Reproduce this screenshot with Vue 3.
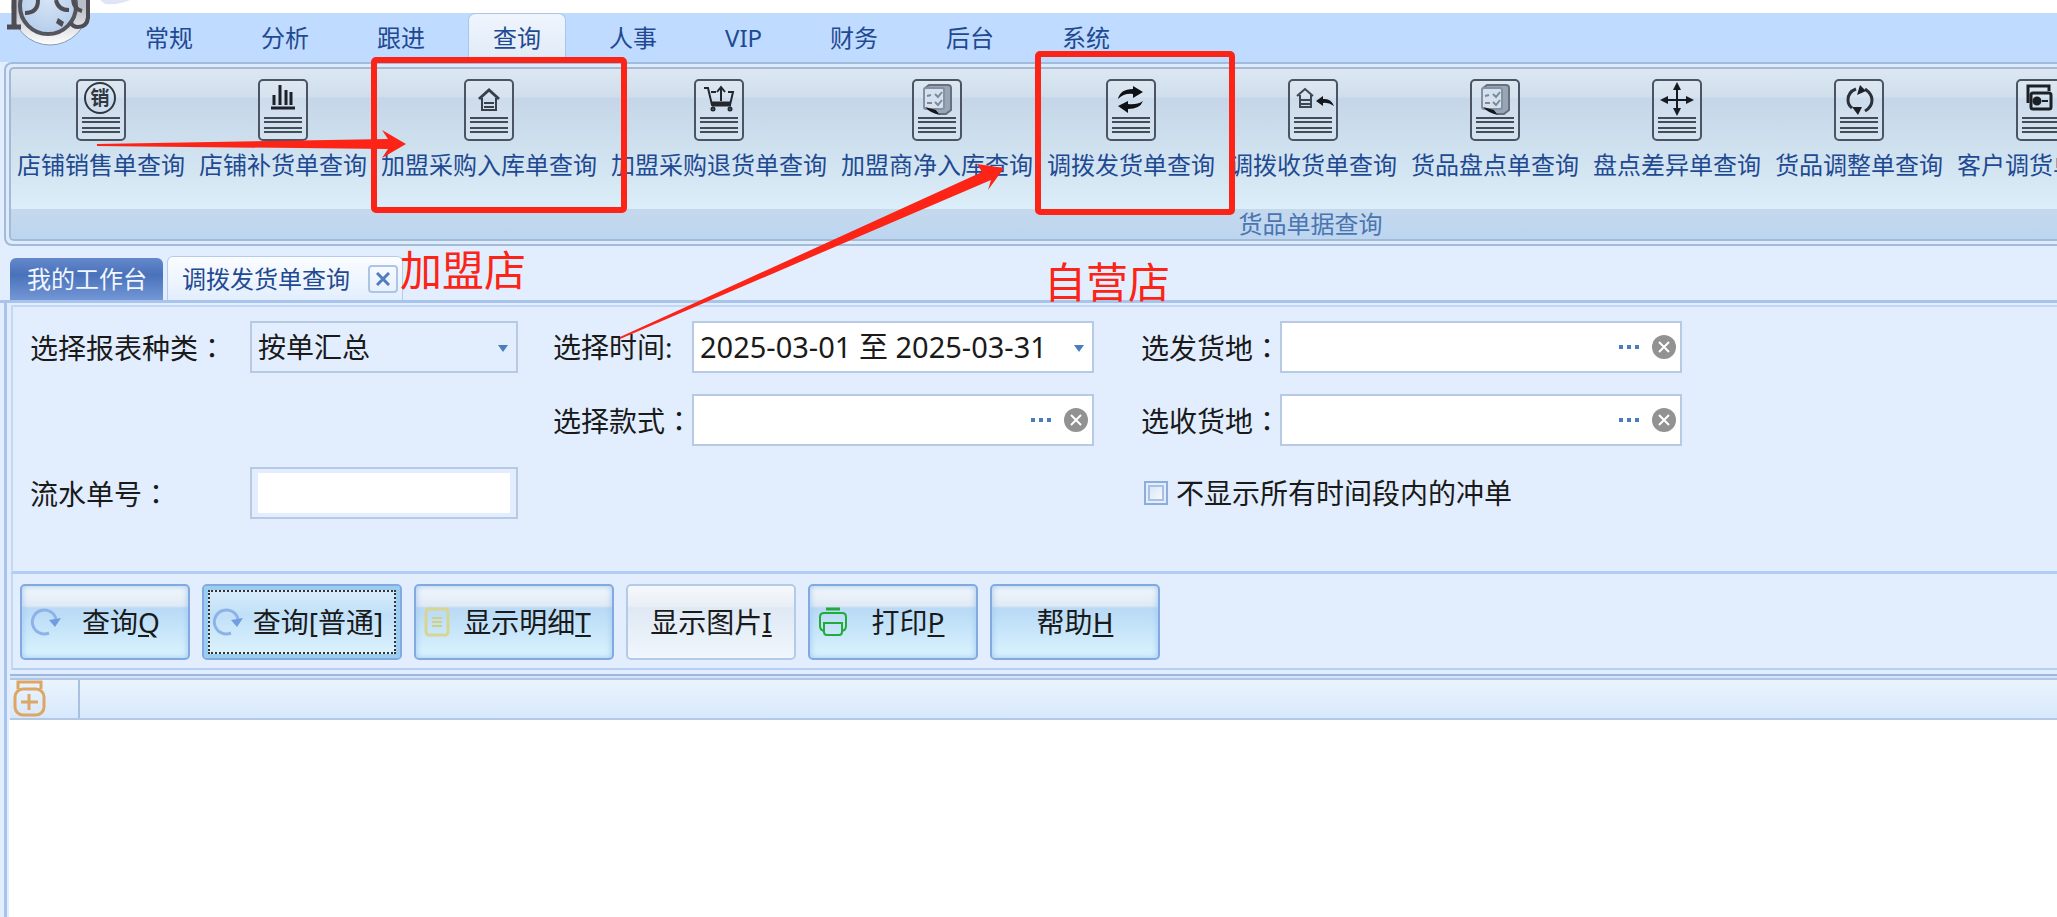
<script setup>
  import {ref} from "vue";

  const menus = ["常规", "分析", "跟进", "查询", "人事", "VIP", "财务", "后台", "系统"];
  const activeMenu = ref("查询");

  const reports = [
    {text: "店铺销售单查询", icon: "sale"},
    {text: "店铺补货单查询", icon: "chart"},
    {text: "加盟采购入库单查询", icon: "house"},
    {text: "加盟采购退货单查询", icon: "cart"},
    {text: "加盟商净入库查询", icon: "book"},
    {text: "调拨发货单查询", icon: "swap"},
    {text: "调拨收货单查询", icon: "receive"},
    {text: "货品盘点单查询", icon: "book"},
    {text: "盘点差异单查询", icon: "move"},
    {text: "货品调整单查询", icon: "cycle"},
    {text: "客户调货单查询", icon: "cards"}
  ];

  const reportType = ref("按单汇总");
  const period = ref("2025-03-01 至 2025-03-31");
  const serialNo = ref("");
  const hideReversed = ref(false);

  const lookups = ref([
    {id: "from", label: "选发货地", value: ""},
    {id: "style", label: "选择款式", value: ""},
    {id: "to", label: "选收货地", value: ""}
  ]);

  const actions = [
    {text: "查询", key: "Q", icon: "refresh"},
    {text: "查询[普通]", key: "", icon: "refresh", wide: true, focused: true},
    {text: "显示明细", key: "T", icon: "list", wide: true},
    {text: "显示图片", key: "I", plain: true},
    {text: "打印", key: "P", icon: "print"},
    {text: "帮助", key: "H"}
  ];
</script>

<template>
  <main>
    <div class="title-bar"></div>
    <nav class="menu">
      <button
        v-for="menu in menus"
        :key="menu"
        :class="{active: menu === activeMenu}"
        @click="activeMenu = menu">{{ menu }}</button>
    </nav>

    <svg class="logo" width="140" height="50" viewBox="0 0 140 50">
      <defs>
        <radialGradient id="logoFill" cx="50%" cy="40%" r="60%">
          <stop offset="0" stop-color="#d5e4f5" />
          <stop offset="1" stop-color="#b5cdec" />
        </radialGradient>
        <linearGradient id="logoRing" x1="0" y1="0" x2="0" y2="1">
          <stop offset="0.5" stop-color="#b9bec8" />
          <stop offset="1" stop-color="#ffffff" />
        </linearGradient>
      </defs>
      <circle cx="50" cy="7" r="38" fill="url(#logoRing)" stroke="#8c9bb5" />
      <circle cx="48" cy="6" r="28" fill="url(#logoFill)" stroke="#55555d" stroke-width="4" />
      <g fill="none" stroke="#4f4d54" stroke-width="5">
        <path d="M14 0V27M7 27H21" />
        <path d="M25 13Q38 13 38 0" stroke-width="4" />
        <path d="M56 0Q58 10 69 10" stroke-width="4" />
        <path d="M73 0Q74 9 82 11M88 0V18Q87 27 78 27Q73 27 71 23" stroke-width="4" />
      </g>
      <path d="M58 18L64 22L62 27L56 23z" fill="#4f4d54" />
      <path d="M100 0H130Q120 5 105 4z" fill="#dfe5f4" />
    </svg>

    <section class="ribbon">
      <div class="ribbon-group">
        <div class="reports">
          <button v-for="report in reports" :key="report.text">
            <svg width="50" height="62" viewBox="0 0 50 62">
              <rect x="1" y="1" width="48" height="60" rx="4" fill="#ffffff" fill-opacity="0.15" stroke="#4a5463" stroke-width="2" />
              <path d="M6 39H44M6 43H44M6 49H44M6 53H44" stroke="#434c59" stroke-width="2" />
              <g v-if="report.icon === 'sale'">
                <circle cx="24" cy="19" r="15" fill="none" stroke="#2f3742" stroke-width="2" />
                <text x="24" y="26" text-anchor="middle" font-size="19" font-weight="bold" fill="#2f3742">销</text>
              </g>
              <path v-else-if="report.icon === 'chart'" d="M13 29H37M16 26V16M22 26V6M28 26V11M33 26V13" fill="none" stroke="#1c2128" stroke-width="3" />
              <g v-else-if="report.icon === 'house'" fill="none" stroke="#39404b" stroke-width="2">
                <path d="M15 20L25 11L35 20" stroke-width="3" />
                <path d="M18 19V31H32V19M20 24H30M20 28H30" />
              </g>
              <g v-else-if="report.icon === 'cart'" fill="none" stroke="#22272e" stroke-width="3">
                <path d="M10 9H14L18 26H36L39 13H34M17 13H22" stroke-width="2" />
                <path d="M18 25H37" stroke-width="5" />
                <path d="M27 22V9M23 13L27 8L31 13" stroke-width="2" />
                <circle cx="19" cy="30" r="1" />
                <circle cx="36" cy="30" r="1" />
              </g>
              <g v-else-if="report.icon === 'book'">
                <path d="M12 10L17 6H36Q39 6 39 9V31L34 35H27" fill="#97a5b5" stroke="#66717f" stroke-width="2" />
                <rect x="12" y="9" width="20" height="21" rx="2" fill="#d5e1ee" stroke="#8492a4" stroke-width="2" />
                <path d="M15 17L19 16M15 24H20M23 15L26 18L30 13M23 23L26 26L30 21" fill="none" stroke="#7b8998" stroke-width="2" />
                <path d="M13 28L24 31L28 36Q18 34 13 28z" fill="#14181d" />
              </g>
              <g v-else-if="report.icon === 'swap'" fill="#0d1014">
                <path d="M12 20Q14 10 27 10V7L37 13L27 19V15Q18 14 12 20z" />
                <path d="M37 22Q34 30 22 30V34L12 27L22 22V25Q31 26 37 22z" />
              </g>
              <g v-else-if="report.icon === 'receive'">
                <path d="M9 17L17 10L25 17M12 16V28H23V16M12 21H23M12 25H23" fill="none" stroke="#3e4754" stroke-width="2" />
                <path d="M28 22L35 17V20Q43 19 46 27Q40 23 35 24V27z" fill="#14181d" />
              </g>
              <g v-else-if="report.icon === 'move'" fill="#171b21">
                <path d="M25 8V33M12 21H38" stroke="#171b21" stroke-width="2" />
                <path d="M25 3L29 11H21zM25 37L29 29H21zM8 21L16 17V25zM42 21L34 17V25z" />
              </g>
              <g v-else-if="report.icon === 'cycle'">
                <path d="M22 10Q14 13 14 21Q14 26 18 29M31 10Q38 15 38 21Q38 28 31 32" fill="none" stroke="#2a313a" stroke-width="3" />
                <path d="M26 6L32 12L23 16zM18 28H28L24 36z" fill="#1b2027" />
              </g>
              <g v-else fill="none" stroke="#1b2027" stroke-width="3">
                <path d="M12 24V7H33V12" />
                <rect x="15" y="14" width="20" height="16" rx="2" />
                <circle cx="21" cy="22" r="3" fill="#1b2027" />
                <path d="M26 22H32" stroke-width="2" />
              </g>
            </svg>
            <span>{{ report.text }}</span>
          </button>
        </div>
        <div class="group-title">货品单据查询</div>
      </div>
    </section>

    <div class="doc-tabs">
      <button class="doc-tab">我的工作台</button>
      <div class="doc-tab current">
        <span>调拨发货单查询</span>
        <button class="close" aria-label="关闭">
          <svg width="14" height="14" viewBox="0 0 14 14">
            <path d="M1 1L13 13M13 1L1 13" stroke="#4f7dbf" stroke-width="3" />
          </svg>
        </button>
      </div>
    </div>

    <div class="workspace">
      <form class="filters" @submit.prevent>
        <div class="field first">
          <label for="reportType">选择报表种类<span class="colon">：</span></label>
          <div class="box tinted">
            <select id="reportType" v-model="reportType">
              <option>按单汇总</option>
            </select>
            <svg class="caret" width="10" height="7" viewBox="0 0 10 7"><path d="M0 0H10L5 7z" fill="#4a7dbd" /></svg>
          </div>
        </div>
        <div class="field">
          <label for="period">选择时间:</label>
          <div class="box">
            <select id="period" class="period" v-model="period">
              <option>2025-03-01 至 2025-03-31</option>
            </select>
            <svg class="caret" width="10" height="7" viewBox="0 0 10 7"><path d="M0 0H10L5 7z" fill="#4a7dbd" /></svg>
          </div>
        </div>
        <div v-for="item in lookups" :key="item.id" class="field" :class="item.id">
          <label :for="item.id">{{ item.label }}<span class="colon">：</span></label>
          <div class="box">
            <input :id="item.id" type="text" v-model="item.value">
            <button type="button" class="more" aria-label="选择">
              <svg width="22" height="6" viewBox="0 0 22 6"><path d="M1 1h4v4h-4zM9 1h4v4h-4zM17 1h4v4h-4z" fill="#4a7dbd" /></svg>
            </button>
            <button type="button" class="clear" aria-label="清除" @click="item.value = ''">
              <svg width="24" height="24" viewBox="0 0 24 24">
                <circle cx="12" cy="12" r="12" fill="#929292" />
                <path d="M7 7L17 17M17 7L7 17" stroke="#fff" stroke-width="2" />
              </svg>
            </button>
          </div>
        </div>
        <div class="field first serial">
          <label for="serialNo">流水单号<span class="colon">：</span></label>
          <div class="box inset">
            <input id="serialNo" type="text" v-model="serialNo">
          </div>
        </div>
        <label class="check">
          <input type="checkbox" v-model="hideReversed">
          <span>不显示所有时间段内的冲单</span>
        </label>
      </form>

      <div class="actions">
        <button
          v-for="action in actions"
          :key="action.text"
          :class="{wide: action.wide, focused: action.focused, plain: action.plain}">
          <svg v-if="action.icon === 'refresh'" width="32" height="32" viewBox="0 0 32 32">
            <path d="M19 27A12 12 0 1 1 26 13" fill="none" stroke="#8eb2e8" stroke-width="3" />
            <path d="M19 14L31 12L25 21z" fill="#709ce0" />
          </svg>
          <svg v-else-if="action.icon === 'list'" width="26" height="32" viewBox="0 0 26 32">
            <rect x="2" y="3" width="22" height="26" rx="3" fill="none" stroke="#d8d590" stroke-width="3" />
            <path d="M8 12H18M8 16H18M8 20H18" stroke="#d3cf80" stroke-width="2" />
          </svg>
          <svg v-else-if="action.icon === 'print'" width="30" height="32" viewBox="0 0 30 32">
            <g fill="none" stroke="#22aa3a" stroke-width="2">
              <path d="M8 3H22" stroke-width="3" />
              <path d="M6 25Q2 24 2 20V11Q2 7 6 7H24Q28 7 28 11V20Q28 24 24 25" />
              <path d="M6 17H24V26Q24 29 21 29H9Q6 29 6 26z" />
            </g>
          </svg>
          <span>{{ action.text }}<u>{{ action.key }}</u></span>
        </button>
      </div>

      <div class="grid-head">
        <button class="expand" aria-label="展开">
          <svg width="34" height="38" viewBox="0 0 34 38" fill="none" stroke="#dda664" stroke-width="3">
            <path d="M5 9V2H28V9" />
            <rect x="2" y="9" width="29" height="26" rx="8" />
            <path d="M16 14V30M8 22H25" />
          </svg>
        </button>
      </div>
      <div class="grid-body"></div>
    </div>

    <div class="notes">
      <svg width="1240" height="345" viewBox="0 0 1240 345">
        <g fill="none" stroke="#fb2416" stroke-width="6">
          <rect x="374" y="60" width="250" height="150" rx="2" />
          <rect x="1038" y="54" width="194" height="158" rx="2" />
        </g>
        <path d="M97 144L388 139L382 130L406 144L382 158L388 149L97 146z" fill="#fb2416" />
        <path d="M620 337L982 172L977 164L1004 168L988 190L991 180L620 339z" fill="#fb2416" />
      </svg>
      <span class="note franchise">加盟店</span>
      <span class="note direct">自营店</span>
    </div>
  </main>
</template>

<style>
  body {
    margin: 0;
  }
</style>

<style scoped>
  main {
    position: relative;
    min-height: 100vh;
    overflow: hidden;
    display: flex;
    flex-direction: column;
    background-color: #e2eefe;
    font-family: "Noto Sans", "Noto Sans CJK SC", sans-serif;
    font-size: 24px;
    line-height: 32px;
    color: #1f4a91;
  }

  button, input, select {
    font: inherit;
    color: inherit;
    margin: 0;
    padding: 0;
    border: none;
    background: none;
    box-sizing: border-box;
  }

  svg {
    display: block;
    flex: none;
  }

  .title-bar {
    height: 13px;
    background-color: #fff;
  }

  .menu {
    display: flex;
    gap: 18px;
    height: 49px;
    padding-left: 120px;
    background-color: #bfdbff;
  }

  .menu button {
    padding: 0 24px;
    border: 1px solid transparent;
    border-radius: 7px 7px 0 0;
  }

  .menu .active {
    border-color: #a9c5e8;
    border-bottom-color: transparent;
    background: linear-gradient(#eff5fd, #e0ebf7);
  }

  .logo {
    position: absolute;
    left: 0;
    top: 0;
  }

  .ribbon {
    margin-left: 4px;
    padding: 3px 0 3px 3px;
    border: 2px solid #a3bbdb;
    border-right: none;
    border-radius: 8px 0 0 8px;
    background-color: #dcecfb;
  }

  .ribbon-group {
    border: 2px solid #a3b9d5;
    border-right: none;
    border-radius: 5px 0 0 5px;
    overflow: hidden;
    background: linear-gradient(#dce7f2, #d0deec 28px, #c5d6e9 29px, #cfe0ee 80px, #dceef9 140px);
  }

  .reports {
    display: flex;
    gap: 14px;
    height: 140px;
    padding-left: 6px;
  }

  .reports button {
    flex: none;
    display: flex;
    flex-direction: column;
    align-items: center;
    gap: 8px;
    padding-top: 10px;
    white-space: nowrap;
  }

  .group-title {
    height: 30px;
    padding-left: 60%;
    line-height: 30px;
    color: #4a75b1;
    background: linear-gradient(#c5d9ed, #bcd5f0);
  }

  .doc-tabs {
    display: flex;
    align-items: flex-end;
    gap: 4px;
    height: 54px;
    padding-left: 10px;
    border-bottom: 3px solid #a9c4ec;
  }

  .doc-tab {
    height: 42px;
    padding: 0 16px 0 17px;
    border-radius: 6px 6px 0 0;
    color: #f1f6ff;
    background: linear-gradient(#6488cb, #4a72ba 40%, #7397d6);
  }

  .current {
    display: flex;
    align-items: center;
    gap: 18px;
    height: 44px;
    padding: 0 4px 0 14px;
    border: 1px solid #b3cbee;
    border-bottom: none;
    color: #1f4a91;
    background: linear-gradient(#fbfdff, #e2eefe);
    box-sizing: border-box;
  }

  .close {
    display: flex;
    align-items: center;
    justify-content: center;
    width: 30px;
    height: 28px;
    border: 2px solid #adc4e4;
    border-radius: 4px;
  }

  .workspace {
    flex: 1;
    display: flex;
    flex-direction: column;
    margin-left: 4px;
    border-left: 3px solid #a9c4ec;
    font-size: 28px;
    line-height: 36px;
    color: #1a1a1a;
  }

  .filters {
    display: grid;
    grid-template-columns: 523px 588px 1fr;
    grid-template-rows: repeat(3, 52px);
    row-gap: 21px;
    margin-left: 4px;
    margin-top: 2px;
    padding: 14px 0 52px 17px;
    border-top: 2px solid #c2d8f6;
    border-left: 2px solid #c2d8f6;
    border-bottom: 3px solid #b0cdf3;
  }

  .field {
    display: flex;
    align-items: center;
    white-space: nowrap;
  }

  .field label {
    width: 139px;
    flex: none;
  }

  .first label {
    width: 220px;
  }

  /* full-width colon centred in its cell */
  .colon {
    font-family: "Noto Sans CJK TC", sans-serif;
  }

  .box {
    display: flex;
    align-items: center;
    position: relative;
    width: 402px;
    height: 52px;
    border: 2px solid #b8cae3;
    background-color: #fff;
    box-sizing: border-box;
  }

  .first .box {
    width: 268px;
  }

  .box select {
    appearance: none;
    width: 100%;
    height: 100%;
    padding-left: 6px;
  }

  .box .period {
    font-size: 29px;
  }

  .tinted {
    background-color: #e2eefe;
  }

  .caret {
    position: absolute;
    right: 8px;
    top: 22px;
    pointer-events: none;
  }

  .box input {
    flex: 1;
    min-width: 0;
    height: 100%;
    padding: 0 6px;
  }

  .inset {
    padding: 4px 6px;
    background-color: #e2eefe;
  }

  .inset input {
    background-color: #fff;
  }

  .more {
    margin-right: 12px;
  }

  .clear {
    margin-right: 4px;
  }

  .style {
    grid-area: 2 / 2;
  }

  .to {
    grid-area: 2 / 3;
  }

  .serial {
    grid-area: 3 / 1;
  }

  .check {
    grid-area: 3 / 3;
    display: flex;
    align-items: center;
    gap: 8px;
    padding-left: 3px;
  }

  .check input {
    appearance: none;
    width: 24px;
    height: 24px;
    border: 2px solid #8fadda;
    background: linear-gradient(135deg, #d0dff5, #fff);
    box-shadow: inset 0 0 0 2px #e2eefe, inset 0 0 0 4px #a9c0e6;
  }

  .check input:checked {
    background: #4a7dbd;
  }

  .actions {
    display: flex;
    gap: 12px;
    margin-left: 4px;
    padding: 10px 0 8px 7px;
    border-left: 2px solid #c2d8f6;
    border-bottom: 2px solid #b6d0f3;
  }

  .actions button {
    display: flex;
    align-items: center;
    width: 170px;
    height: 76px;
    padding: 0 8px;
    border: 2px solid #83aae0;
    border-radius: 5px;
    background: linear-gradient(#f4f8fc, #dfe9f4 20px, #b9d9f5 22px, #c1e1f9 50%, #dbf3fe);
    box-shadow: inset 0 0 6px #9cc6ee;
  }

  .actions .wide {
    width: 200px;
  }

  .actions .focused {
    outline: 2px dotted #333;
    outline-offset: -8px;
    background: linear-gradient(#dceefb, #c0e0f8 40%, #dff4fe);
    box-shadow: inset 0 0 0 4px #9bcdf1;
  }

  .actions .plain {
    border-color: #b5cae6;
    background: linear-gradient(#f6f8fb, #e9eff6 20px, #dfe9f4 22px, #f0f6fc);
    box-shadow: none;
  }

  .actions span {
    flex: 1;
    text-align: center;
    white-space: nowrap;
  }

  .grid-head {
    display: flex;
    height: 38px;
    margin-top: 8px;
    margin-left: 3px;
    border-top: 2px solid #b1c7e2;
    border-bottom: 2px solid #b4c9e4;
    background: linear-gradient(#e9f4fd, #d8e8fc);
    box-shadow: 0 -2px 0 #d3e3f9, 0 -4px 0 #9db8e0;
  }

  .expand {
    width: 70px;
    padding-left: 3px;
    border-right: 2px solid #a9c1e0;
  }

  .grid-body {
    flex: 1;
    margin-left: 2px;
    background-color: #fff;
  }

  /* red markup drawn over the window */
  .notes {
    position: absolute;
    left: 0;
    top: 0;
    pointer-events: none;
  }

  .note {
    position: absolute;
    font-size: 42px;
    line-height: 50px;
    white-space: nowrap;
    color: #fb2416;
  }

  .franchise {
    left: 400px;
    top: 245px;
  }

  .direct {
    left: 1044px;
    top: 257px;
  }
</style>
